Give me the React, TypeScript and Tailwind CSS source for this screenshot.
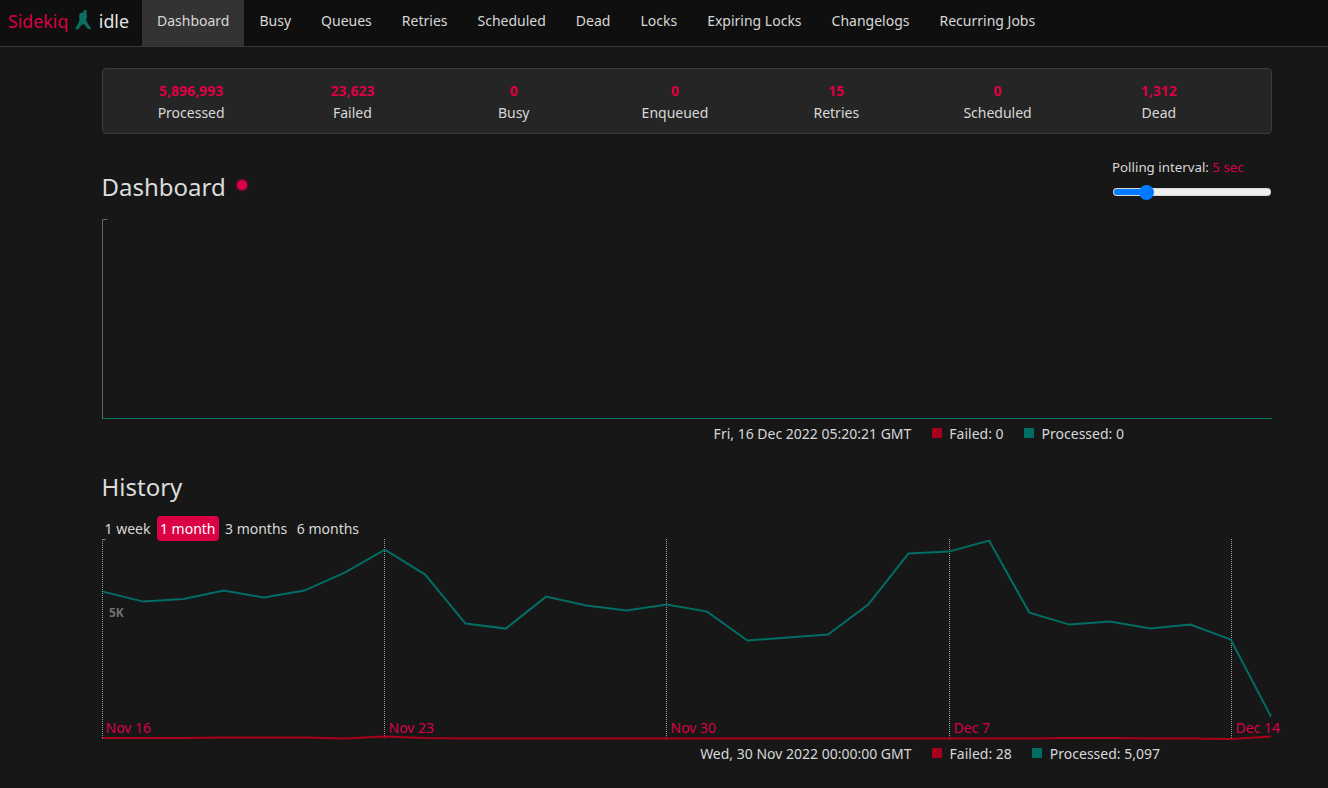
const NAV = ["Dashboard","Busy","Queues","Retries","Scheduled","Dead","Locks","Expiring Locks","Changelogs","Recurring Jobs"];
const STATS: [string,string][] = [["5,896,993","Processed"],["23,623","Failed"],["0","Busy"],["0","Enqueued"],["15","Retries"],["0","Scheduled"],["1,312","Dead"]];
const PTS = [591,601,598.5,590,597,590,572,549,574,623,628,596,605,610,604,611,640,637,634,604,553,551,540,612,624,621,628,624,639,716];
const RED = [737.5,737.5,737.5,737,737,737,737.5,737.5,736,737.5,738,738,738,738,738,738,738,738,738,738,738,738,738,738,737.5,737.5,738,738,738.5,736];
RED[6] = 738; RED[7] = 736; RED[8] = 737.5; RED[9] = 738;
const STEP = 1168/29;
const line = (a:number[]) => a.map((y,i)=>`${(1+i*STEP).toFixed(1)},${(y-538.4).toFixed(1)}`).join(" ");

function Logo(){
  return <svg width="16" height="20" viewBox="0 0 16 20" className="ml-[7px] mr-[7.5px] mt-[-3px]">
    <path d="M9 0 L12 0.5 L11.5 4 L12 7 L11 10 L13 14 L16 18 L15.5 19.5 L12.5 18.5 L9 14 L6.5 15 L3.5 19 L1 19.5 L0.5 18 L3 14 L4.5 10 L4 6 L5 3 L7.5 3 Z" fill="#0b6e61"/>
  </svg>;
}
function Legend({date,failed,processed,pad}:{date:string,failed:string,processed:string,pad:string}){
  return <div className={`flex items-center h-[28px] text-[14px] text-[#d8d8d8] ${pad}`}>
    <span className="ml-auto">{date}</span>
    <span className="w-[10px] h-[10px] bg-[#a8001e] ml-[20.5px] mr-[7.5px]"/>
    <span>Failed: {failed}</span>
    <span className="w-[10px] h-[10px] bg-[#006e64] ml-[20px] mr-[8px]"/>
    <span>Processed: {processed}</span>
  </div>;
}
export default function App(){
  return <div className="min-h-[788px] bg-[#171717] text-[#d8d8d8] text-[14px] font-['Noto_Sans','Open_Sans',sans-serif]">
    <nav className="h-[47px] bg-[#0f0f0f] border-b border-[#3a3a3a] flex items-stretch">
      <div className="flex items-center pl-[8px] w-[142px] text-[17.8px] pb-[4px]">
        <span className="text-[#dc0045]">Sidekiq</span><Logo/><span className="text-[#e4e4e4]">idle</span>
      </div>
      {NAV.map((n,i)=><a key={n} className={`flex items-center px-[15px] pb-[5px] ${i===0?"bg-[#333333]":""}`}>{n}</a>)}
    </nav>
    <main className="ml-[102px] w-[1170px]">
      <section className="mt-[21px] h-[66px] rounded border border-[#3b3b3b] bg-[#252525] pl-[7.5px] pt-[11px]">
        <div className="grid grid-cols-7 w-[1129px]">
          {STATS.map(([v,l])=><div key={l} className="text-center">
            <div className="font-bold text-[#dc0045] leading-[22px]">{v}</div>
            <div className="leading-[22px]">{l}</div>
          </div>)}
        </div>
      </section>
      <section className="flex justify-between h-[85px]">
        <div className="flex items-start pt-[37px]">
          <h3 className="text-[24px] leading-[32px] text-[#dcdcdc] ml-[-0.5px]">Dashboard</h3>
          <span className="w-[10px] h-[10px] rounded-full bg-[#dc0045] shadow-[0_0_3px_#dc0045] ml-[11.5px] mt-[9px]"/>
        </div>
        <div className="w-[160px] pt-[24px] text-[13.3px]">
          <div className="leading-[18px] whitespace-nowrap">Polling interval: <span className="text-[#dc0045]">5 sec</span></div>
          <div className="relative h-[8px] mt-[12px] ml-[1px] mr-[1px] rounded-full bg-[#efefef] border border-[#b8b8b8]/40">
            <div className="w-[33px] h-full rounded-l-full bg-[#007bff]"/>
            <div className="absolute left-[25px] top-[-4px] w-[15px] h-[15px] rounded-full bg-[#007bff]"/>
          </div>
        </div>
      </section>
      <svg width="1170" height="200" className="block">
        <path d="M5.5 0.5H0.5V199" fill="none" stroke="#666" />
        <path d="M0 199.5H1170" stroke="#00796b" />
      </svg>
      <Legend date="Fri, 16 Dec 2022 05:20:21 GMT" failed="0" processed="0" pad="pr-[148px]"/>
      <h3 className="text-[24px] leading-[32px] mt-[24px] text-[#dcdcdc] ml-[-0.5px]">History</h3>
      <div className="flex items-center mt-[13px] mb-[-2px] h-[25px] relative">
        <a className="pl-[2.5px] pr-[3px] mr-[3.5px]">1 week</a>
        <a className="px-[3px] h-[25px] flex items-center rounded bg-[#dc0045] text-white">1 month</a>
        <a className="px-[3px] ml-[3.5px] mr-[3px]">3 months</a>
        <a className="px-[3px] ml-[0.5px]">6 months</a>
      </div>
      <div className="relative h-[200px]">
        <svg width="1190" height="200" className="block overflow-visible">
          {[0.5,282.5,564.5,847.5,1129.5].map(x=><path key={x} d={`M${x} 0V200`} stroke="#9a9a9a" strokeDasharray="1 1"/>)}
          <path d="M0.5 0.5H3.5M0.5 199.5H3.5" stroke="#888"/>
          <polyline points={line(PTS)} fill="none" stroke="#006e64" strokeWidth="2"/>
          <polyline points={line(RED)} fill="none" stroke="#a8001e" strokeWidth="2"/>
        </svg>
        <span className="absolute left-[7px] top-[65px] text-[12px] font-bold text-[#707070]">5K</span>
        {[["Nov 16",3.5],["Nov 23",286.5],["Nov 30",568.5],["Dec 7",851.5],["Dec 14",1133.5]].map(([t,x])=>
          <span key={t as string} className="absolute top-[179px] text-[#dc0045] leading-[20px] whitespace-nowrap" style={{left:x as number}}>{t}</span>)}
      </div>
      <Legend date="Wed, 30 Nov 2022 00:00:00 GMT" failed="28" processed="5,097" pad="pr-[112px]"/>
    </main>
  </div>;
}
